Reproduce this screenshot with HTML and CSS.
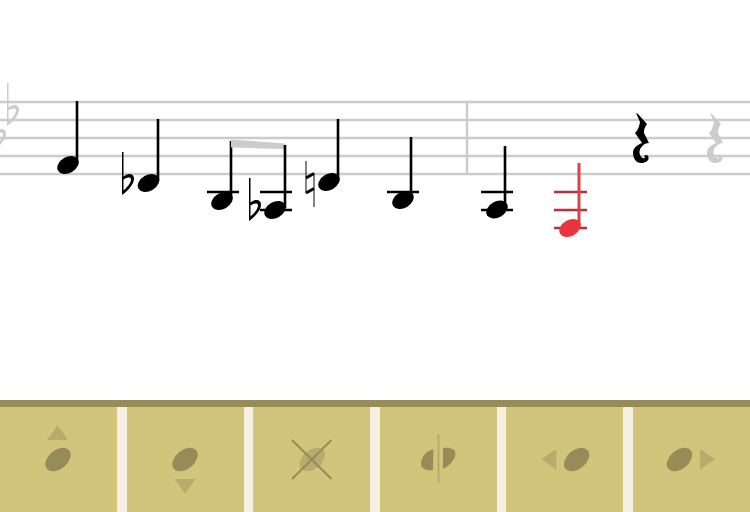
FILE: index.html
```html
<!DOCTYPE html>
<html lang="en">
  <head>
    <meta charset="UTF-8" />
    <meta name="viewport" content="width=device-width, initial-scale=1.0" />
    <title>Noder</title>
    <link rel="stylesheet" href="styles.css">
  </head>
  <body>
    <svg class="score" viewBox="0 0 750 400" aria-label="Score">
      <defs>
        <ellipse id="head" rx="11.500" ry="8" transform="rotate(-30)" />
        <path id="flat" d="M0 0V43L2 41.500C7 37.500 12 32 12 26.500C12 21.500 6.500 20.500 1.500 24.500V0ZM1.500 27.500C5 25 9 24.500 9 27.500C9 31 5 35.500 1.500 38.500Z" />
        <path id="rest" d="M1 0L3 1L12 11C10 14 8.500 17 9 20L14 30C9 30 4 35 4.500 40C5 44 8 46 10 45C9 44 9 42 11 42C13 42 14 44 13.500 46C13 48 10 50 6 50C1 50 -2 45 -2 40C-2 35 2 32 7 30L0 20C3 17 4 14 5 9Z" />
      </defs>

      <g class="lines">
        <path d="M0 102H750M0 120H750M0 138H750M0 156H750M0 174H750" />
        <path d="M467 102V174" />
      </g>

      <g class="faded">
        <use href="#flat" x="7" y="83" />
        <use href="#flat" x="-6" y="107" />
        <use href="#rest" x="709" y="113" />
      </g>

      <use href="#head" x="68" y="165" />
      <rect class="stem" x="75.700" y="101" width="2.600" height="62" />

      <use href="#flat" x="122" y="152" />
      <use href="#head" x="148.500" y="183" />
      <rect class="stem" x="156.700" y="119" width="2.600" height="62" />

      <path class="ledger" d="M207 192H239" />
      <use href="#head" x="222" y="201" />
      <rect class="stem" x="229.700" y="141" width="2.600" height="58" />

      <polygon class="beam" points="231,139.500 285,143.500 285,149 231,147.500" />

      <path class="ledger" d="M260 192H292M260 210H292" />
      <use href="#flat" x="249" y="178" />
      <use href="#head" x="275" y="210" />
      <rect class="stem" x="283.700" y="145" width="2.600" height="63" />

      <path class="natural" d="M306 161V193M314 173V207" />
      <path class="natural-bars" d="M306 178L314 173.500M306 193L314 188.500" />
      <use href="#head" x="329" y="182" />
      <rect class="stem" x="336.700" y="119" width="2.600" height="62" />

      <path class="ledger" d="M387 192H419" />
      <use href="#head" x="403" y="200" />
      <rect class="stem" x="409.700" y="137" width="2.600" height="61" />

      <path class="ledger" d="M481 192H513M481 210H513" />
      <use href="#head" x="497" y="209.500" />
      <rect class="stem" x="503.700" y="146" width="2.600" height="62" />

      <g class="active">
        <path class="ledger" d="M554 192H587M554 210H587M554 228H587" />
        <rect class="stem" x="577.500" y="163" width="3" height="63" />
        <use href="#head" x="570" y="228" />
      </g>

      <use href="#rest" x="635" y="113" />
    </svg>

    <nav class="tools">
      <button class="tool">
        <svg viewBox="0 0 117 104">
          <polygon class="arrow" points="57.500,17 68,32 47,32" />
          <ellipse class="blob" cx="58" cy="51.500" rx="14.500" ry="9.500" transform="rotate(-40 58 51.500)" />
        </svg>
      </button>
      <button class="tool">
        <svg viewBox="0 0 117 104">
          <ellipse class="blob" cx="58" cy="51.500" rx="14.500" ry="9.500" transform="rotate(-40 58 51.500)" />
          <polygon class="arrow" points="47.500,71 68.500,71 58,86" />
        </svg>
      </button>
      <button class="tool">
        <svg viewBox="0 0 117 104">
          <ellipse class="arrow" cx="59.300" cy="51.500" rx="14.500" ry="9.500" transform="rotate(-40 59.300 51.500)" />
          <path class="cross" d="M39 32L78.500 71M78.500 32L39 71" />
        </svg>
      </button>
      <button class="tool">
        <svg viewBox="0 0 117 104">
          <path class="blob" d="M53.500 41C46 43 41 49 41 56C41 61 47 63 53 62Z" />
          <path class="blob" d="M63 40C70 39 76 41 75.500 46C75 52 69 58 63 61Z" />
          <rect class="arrow" x="57.500" y="26" width="2" height="49" />
        </svg>
      </button>
      <button class="tool">
        <svg viewBox="0 0 117 104">
          <polygon class="arrow" points="35.300,51 50.300,41 50.300,62" />
          <ellipse class="blob" cx="70.600" cy="51.500" rx="14.500" ry="9.500" transform="rotate(-40 70.600 51.500)" />
        </svg>
      </button>
      <button class="tool">
        <svg viewBox="0 0 117 104">
          <ellipse class="blob" cx="46.500" cy="51.500" rx="14.500" ry="9.500" transform="rotate(-40 46.500 51.500)" />
          <polygon class="arrow" points="67,41 82,51 67,62" />
        </svg>
      </button>
    </nav>
  </body>
</html>
```

FILE: styles.css
```css
html,
body {
  margin: 0;
  height: 100%;
  background-color: white;
}
body {
  display: flex;
  flex-direction: column;
  height: 512px;
  overflow: hidden;
}
.score {
  display: block;
  width: 750px;
  height: 400px;
  flex: none;
}
.lines path {
  fill: none;
  stroke: #cccccc;
  stroke-width: 2.500;
}
.faded {
  fill: #cccccc;
}
.stem {
  fill: black;
}
.ledger {
  fill: none;
  stroke: black;
  stroke-width: 2.500;
}
.beam {
  fill: #cccccc;
}
.natural {
  fill: none;
  stroke: #333333;
  stroke-width: 1.200;
}
.natural-bars {
  fill: none;
  stroke: black;
  stroke-width: 3;
}
.active {
  fill: #e8343c;
}
.active .stem {
  fill: #d8434b;
}
.active .ledger {
  stroke: #b8323a;
}

.tools {
  flex: 1;
  display: grid;
  grid-template-columns: repeat(6, 1fr);
  gap: 9.600px;
  border-top: 7px solid #978c58;
  background-color: #f5f0e1;
}
.tool {
  display: block;
  border: none;
  padding: 0;
  background-color: #d3c47c;
}
.tool svg {
  display: block;
  width: 117px;
  height: 104px;
}
.blob {
  fill: #978c58;
}
.arrow {
  fill: #b8ab6e;
}
.cross {
  fill: none;
  stroke: #978c58;
  stroke-width: 2;
}
```
